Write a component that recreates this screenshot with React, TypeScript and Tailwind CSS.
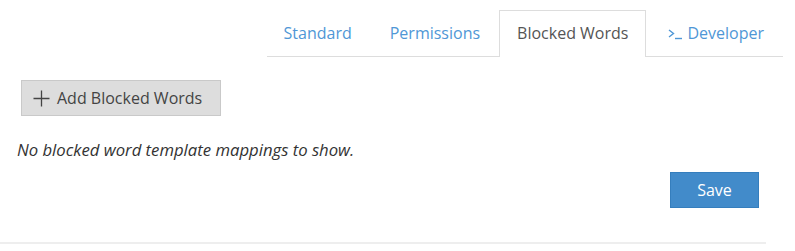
export default function App() {
  const tabs = ["Standard", "Permissions", "Blocked Words", "Developer"];
  const active = "Blocked Words";

  return (
    <div className="w-[795px] h-[251px] bg-white pt-[10px]" style={{ fontFamily: "'Open Sans', 'Liberation Sans', sans-serif" }}>
      {/* Tabs */}
      <div className="flex justify-end pr-[12px]">
        <ul className="flex border-b border-[#dddddd]">
          {tabs.map((t) => {
            const on = t === active;
            return (
              <li key={t} className={on ? "-mb-px border border-b-0 border-[#dddddd] bg-white" : "border border-transparent"}>
                <a
                  className={
                    "flex items-center h-[44px] text-[16px] cursor-pointer " +
                    (on ? "px-[17px] text-[#555555]" : t === "Developer" ? "pl-[21px] pr-[18px] text-[#4f97d6]" : t === "Standard" ? "pl-[16px] pr-[18px] text-[#4f97d6]" : "px-[18px] text-[#4f97d6]")
                  }
                >
                  {t === "Developer" && (
                    <svg width="15" height="12" viewBox="0 0 15 12" className="mr-[4px] mt-[2px]" fill="none" stroke="currentColor" strokeWidth="1.4">
                      <path d="M1 2 L5.5 5.5 L1 9" />
                      <path d="M7 10.5 H14" />
                    </svg>
                  )}
                  {t}
                </a>
              </li>
            );
          })}
        </ul>
      </div>

      {/* Body */}
      <div className="pl-[21px] pt-[23px]">
        <button className="flex items-center h-[36px] w-[200px] pl-[11px] bg-[#dddddd] border border-[#c9c9c9] text-[16px] text-[#444444]">
          <svg width="17" height="17" viewBox="0 0 17 17" className="mr-[7px]" stroke="#444444" strokeWidth="1.3">
            <path d="M8.5 0.5 V16.5 M0.5 8.5 H16.5" />
          </svg>
          Add Blocked Words
        </button>
      </div>

      <p className="pl-[17px] mt-[23px] text-[16.7px] leading-[22px] italic text-[#333333]">No blocked word template mappings to show.</p>

      <div className="flex justify-end pr-[36px] mt-[11px]">
        <button className="h-[36px] w-[89px] bg-[#428bca] border border-[#357ebd] text-white text-[16px]">Save</button>
      </div>

      <div className="mt-[34px] w-[766px] border-t-2 border-[#eeeeee]" />
    </div>
  );
}
